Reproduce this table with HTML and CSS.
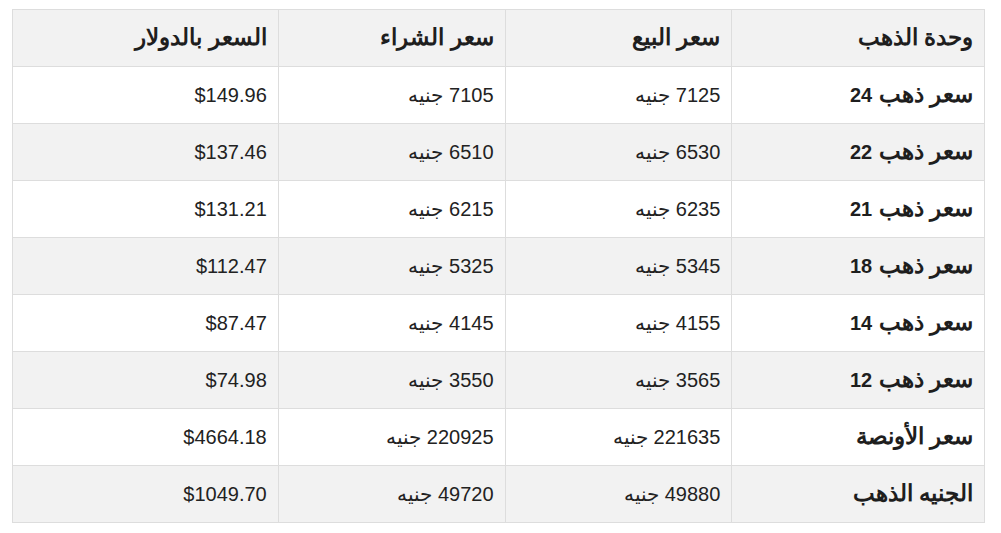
FILE: index.html
```html
<!DOCTYPE html>
<html lang="ar" dir="rtl">
<head>
<meta charset="utf-8">
<link rel="stylesheet" href="styles.css">
</head>
<body>
<div class="wrap">
<table class="prices">
<colgroup>
<col class="c1"><col class="c2"><col class="c3"><col class="c4">
</colgroup>
<thead>
<tr><th>وحدة الذهب</th><th>سعر البيع</th><th>سعر الشراء</th><th>السعر بالدولار</th></tr>
</thead>
<tbody>
<tr><th>سعر ذهب <span class="num">24</span></th><td>7125 جنيه</td><td>7105 جنيه</td><td>$149.96</td></tr>
<tr><th>سعر ذهب <span class="num">22</span></th><td>6530 جنيه</td><td>6510 جنيه</td><td>$137.46</td></tr>
<tr><th>سعر ذهب <span class="num">21</span></th><td>6235 جنيه</td><td>6215 جنيه</td><td>$131.21</td></tr>
<tr><th>سعر ذهب <span class="num">18</span></th><td>5345 جنيه</td><td>5325 جنيه</td><td>$112.47</td></tr>
<tr><th>سعر ذهب <span class="num">14</span></th><td>4155 جنيه</td><td>4145 جنيه</td><td>$87.47</td></tr>
<tr><th>سعر ذهب <span class="num">12</span></th><td>3565 جنيه</td><td>3550 جنيه</td><td>$74.98</td></tr>
<tr><th>سعر الأونصة</th><td>221635 جنيه</td><td>220925 جنيه</td><td>$4664.18</td></tr>
<tr><th>الجنيه الذهب</th><td>49880 جنيه</td><td>49720 جنيه</td><td>$1049.70</td></tr>
</tbody>
</table>
</div>
</body>
</html>
```
FILE: styles.css
```css
html, body {
  margin: 0;
  padding: 0;
  background: #fff;
}
body {
  font-family: "Liberation Sans", Arial, sans-serif;
  color: #222;
}
.wrap {
  padding: 9px 16px 0 12px;
}
.prices {
  width: 973px;
  border-collapse: collapse;
  font-size: 20px;
}
.prices .c1 { width: 253px; }
.prices .c2 { width: 227px; }
.prices .c3 { width: 227px; }
.prices .c4 { width: 266px; }
.prices th,
.prices td {
  border: 1px solid #dddddd;
  height: 57px;
  box-sizing: border-box;
  padding: 0 11px 0 10px;
  text-align: right;
  vertical-align: middle;
  font-weight: normal;
  line-height: 24px;
}
.prices th {
  font-weight: bold;
  font-size: 23px;
  color: #1e1e1e;
  padding-bottom: 2px;
}
.prices th .num {
  font-size: 20px;
}
.prices thead tr,
.prices tbody tr:nth-child(even) {
  background: #f2f2f2;
}
.prices tbody tr:nth-child(odd) {
  background: #fff;
}
```
